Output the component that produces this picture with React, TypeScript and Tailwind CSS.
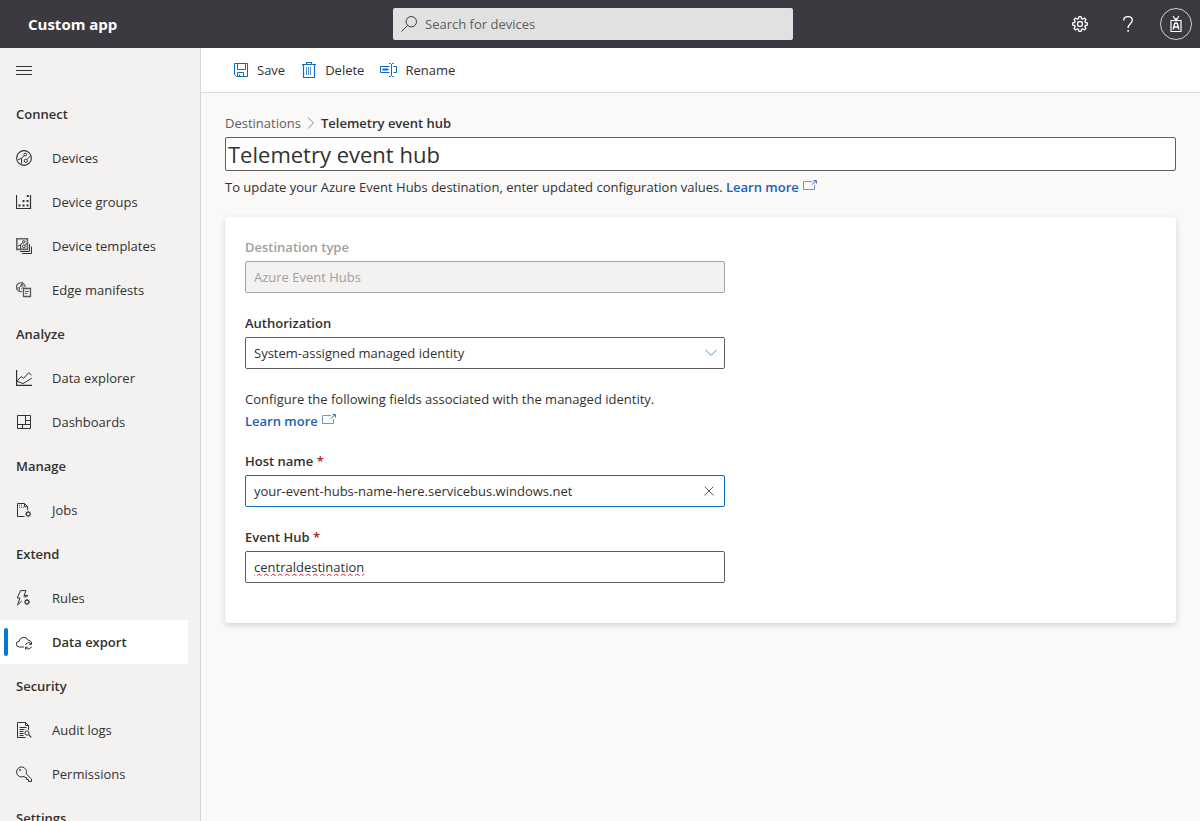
import React, { useState } from "react";

type IconProps = { children: React.ReactNode; className?: string; size?: number; box?: string };

function Icon({ children, className = "", size = 16, box = "0 0 16 16" }: IconProps) {
  return (
    <svg
      className={`shrink-0 ${className}`}
      width={size}
      height={size}
      viewBox={box}
      fill="none"
      stroke="currentColor"
      strokeWidth="1"
      aria-hidden="true"
    >
      {children}
    </svg>
  );
}

const MenuIcon = () => (
  <Icon>
    <path d="M0 4.5h16M0 8.5h16M0 12.5h16" />
  </Icon>
);

const DevicesIcon = () => (
  <Icon>
    <circle cx="8" cy="8" r="7.4" strokeWidth="1.1" />
    <circle cx="9.3" cy="4.6" r="1.4" />
    <circle cx="9.8" cy="10.8" r="1.6" />
    <path d="M8.3 5.600L5.600 8.200v5.600M2 9.800l3.600-1.600M11 9.500l3.200-3.400" />
  </Icon>
);

const GroupsIcon = () => (
  <Icon>
    <path d="M.5 1v13.500h14V1" strokeWidth="1.200" />
    <path
      d="M2.500 10.500h2v2h-2zM6.500 10.500h2v2h-2zM10.500 10.500h2v2h-2zM6.500 6h2v2h-2zM10.500 6h2v2h-2zM10.800 1h2v2h-2z"
      fill="currentColor"
      stroke="none"
    />
  </Icon>
);

const TemplatesIcon = () => (
  <Icon>
    <path d="M.8.8h10.600v10.600H.8z" strokeWidth="1.600" opacity=".75" />
    <circle cx="7.800" cy="3.800" r="1.200" />
    <circle cx="7.800" cy="8.400" r="1.400" />
    <path d="M6.800 4.800L4.600 6.600v4.200M2 8.200l2.600-1.600M8.800 7.400l2.200-2" />
    <path d="M13.500 6v7.500H4M15.500 8.500v7H6" />
  </Icon>
);

const ManifestIcon = () => (
  <Icon>
    <path d="M6.200 9.300A4.400 4.400 0 1 1 9.200 5.200" strokeWidth="1.200" opacity=".8" />
    <circle cx="5.800" cy="3.200" r="1" />
    <path d="M5 4L3.400 5.600v3M1 6.200l2.400-.6M5.400 7l2.400-2.200" opacity=".8" />
    <path d="M7.500 6.500h7v8h-7z" strokeWidth="1.300" fill="#f3f2f1" opacity=".8" />
    <path d="M9 9.500h4M9 11.500h2.500" strokeWidth=".8" />
  </Icon>
);

const ExplorerIcon = () => (
  <Icon>
    <path d="M.6 0v15.400H16" strokeWidth="1.200" />
    <path d="M1 11l4.200-4.400 2.400 1.800 5.200-5.800L15.600 5.400M1 11.200l6 2.400 8.800-5.400" />
  </Icon>
);

const DashboardIcon = () => (
  <Icon>
    <path d="M1.500 1.500h13v13h-13z" />
    <path d="M1.500 10.500h13M9.500 1.500v9M9.500 6.500h5M6.500 10.500v4" />
  </Icon>
);

const MiniGear = ({ x, y }: { x: number; y: number }) => (
  <g transform={`translate(${x} ${y})`}>
    <circle r="1.900" strokeWidth="1.100" />
    <path d="M0-3.100v1M0 2.100v1M-3.100 0h1M2.100 0h1M-2.200-2.200l.7.7M1.500 1.500l.7.7M-2.200 2.200l.7-.7M1.500-1.500l.7-.7" />
  </g>
);

const JobsIcon = () => (
  <Icon>
    <path d="M8.500 14.500h-7V1.500h7l3.200 3.200V8M8.500 1.500v3.200h3.200" />
    <path d="M3 3.200h1M5 3.200h1M3 5.200h1M5 5.200h1M7 5.200h1" strokeWidth=".9" />
    <MiniGear x={12.2} y={12} />
  </Icon>
);

const RulesIcon = () => (
  <Icon>
    <path d="M7.600 6.800H10.500L12 5.400H8L10 .6H4.600L1.200 8H4L1.500 15 5.800 11" />
    <MiniGear x={11} y={12} />
  </Icon>
);

const ExportIcon = () => (
  <Icon>
    <path d="M8 13H3.400A2.900 2.900 0 0 1 3.200 7.200 4.600 4.600 0 0 1 12 6.200 3.200 3.200 0 0 1 15.200 8.400" />
    <path d="M9.600 11a3.100 3.100 0 0 1 5.600-1M15.500 8v2.400h-2.300M15.400 12.600a3.100 3.100 0 0 1-5.400 1.200M9.500 15.400v-2.200h2.300" />
  </Icon>
);

const AuditIcon = () => (
  <Icon>
    <path d="M9.500 15.500h-8V.5h8l3 3V8M9.500.5v3h3" />
    <path d="M3.500 5.500h7M3.500 7.500h5M3.500 9.500h4M3.500 11.500h4M3.500 13.500h4" />
    <circle cx="11" cy="11" r="2.100" />
    <path d="M12.600 12.600l2.800 2.800" strokeWidth="1.200" />
  </Icon>
);

const KeyIcon = () => (
  <Icon>
    <path d="M8.200 10.200A5 5 0 1 1 10.200 7.800L15.500 13v2.500h-3v-2h-2v-2H9z" />
    <circle cx="4" cy="4" r=".9" fill="currentColor" stroke="none" />
  </Icon>
);

const SearchIcon = () => (
  <Icon>
    <circle cx="10.300" cy="5.700" r="5.200" />
    <path d="M6.600 9.400L.4 15.600" />
  </Icon>
);

const GearIcon = () => (
  <Icon>
    <path
      d="M6.900 0.700h2.200l.4 2 1.200.5 1.700-1.200 1.600 1.600-1.200 1.700.5 1.200 2 .4v2.200l-2 .4-.5 1.200 1.200 1.700-1.600 1.600-1.700-1.200-1.200.5-.4 2H6.900l-.4-2-1.200-.5-1.700 1.200L2 12.400l1.200-1.700-.5-1.200-2-.4V6.900l2-.4.5-1.200L2 3.600 3.600 2l1.700 1.200 1.200-.5z"
      strokeWidth="1.300"
      strokeLinejoin="round"
    />
    <circle cx="8" cy="8" r="2.500" strokeWidth="1.300" />
  </Icon>
);

const HelpIcon = () => (
  <Icon>
    <path d="M3.700 4.600C3.700 2 5.400.6 8 .6s4.300 1.400 4.300 3.700c0 3.400-4.200 3.700-4.200 7.700" strokeWidth="1.300" />
    <path d="M8.100 14v1.700" strokeWidth="1.500" />
  </Icon>
);

const BadgeIcon = () => (
  <Icon size={18} box="0 0 18 18">
    <path d="M4 5.500h10v11H4zM6 1l2.600 4M12 1L9.400 5M9 3v3.500" strokeWidth="1.200" />
    <path d="M6.500 14.500v-2l1.300-4.300h2.400l1.300 4.300v2M7 12h4" strokeWidth="1.400" />
  </Icon>
);

const SaveIcon = () => (
  <Icon>
    <path d="M1.500 1.500h13v13h-11l-2-2zM4.500 1.500v6h8v-6M4.500 14.500v-4h6v4M6.500 12.500v2" />
  </Icon>
);

const TrashIcon = () => (
  <Icon>
    <path d="M1 2.500h14M5.500 2.500v-2h5v2M2.500 2.500v13h11v-13" strokeWidth="1.200" />
    <path d="M5.500 5v8M7.500 5v8M9.500 5v8" opacity=".75" />
  </Icon>
);

const RenameIcon = () => (
  <svg className="shrink-0" width="17" height="16" viewBox="0 0 17 16" fill="none" stroke="currentColor" aria-hidden="true">
    <path d="M9.500 4.500h-9v6h9M13.500 4.500h3v6h-3M11.500 2.500v11M9 1.500h1.500l1 1 1-1H14M9 14.500h1.500l1-1 1 1H14" />
    <path d="M2.500 7.500h6" strokeWidth="2" />
  </svg>
);

const ExternalIcon = () => (
  <svg
    className="ml-1 inline-block align-baseline"
    width="14"
    height="12"
    viewBox="0 0 14 12"
    fill="none"
    stroke="#7b8fd0"
    aria-hidden="true"
  >
    <path d="M9 1.500H.5v8h11V5" />
    <path d="M9 4.600L12.800.8M10.500.6h2.900v2.900" stroke="#2f62b5" />
  </svg>
);

type NavEntry = { label: string; icon?: () => React.JSX.Element };

const navigation: NavEntry[] = [
  { label: "Connect" },
  { label: "Devices", icon: DevicesIcon },
  { label: "Device groups", icon: GroupsIcon },
  { label: "Device templates", icon: TemplatesIcon },
  { label: "Edge manifests", icon: ManifestIcon },
  { label: "Analyze" },
  { label: "Data explorer", icon: ExplorerIcon },
  { label: "Dashboards", icon: DashboardIcon },
  { label: "Manage" },
  { label: "Jobs", icon: JobsIcon },
  { label: "Extend" },
  { label: "Rules", icon: RulesIcon },
  { label: "Data export", icon: ExportIcon },
  { label: "Security" },
  { label: "Audit logs", icon: AuditIcon },
  { label: "Permissions", icon: KeyIcon },
  { label: "Settings" },
];

function Header() {
  return (
    <header className="grid h-12 shrink-0 grid-cols-[1fr_minmax(0,400px)_1fr] items-center bg-[#3b3a40] text-white">
      <div className="pl-7 text-[15px] font-bold">Custom app</div>
      <label className="-ml-[7px] flex h-8 w-full items-center gap-2 rounded-xs bg-[#e1e1e1] px-2 text-[#3b3a40]">
        <SearchIcon />
        <input
          type="search"
          aria-label="Search for devices"
          placeholder="Search for devices"
          className="min-w-0 flex-1 bg-transparent outline-none placeholder:text-[#605e5c]"
        />
      </label>
      <div className="flex items-center justify-end gap-4 pr-2">
        <button type="button" aria-label="Settings" className="flex size-8 items-center justify-center">
          <GearIcon />
        </button>
        <button type="button" aria-label="Help" className="flex size-8 items-center justify-center">
          <HelpIcon />
        </button>
        <button
          type="button"
          aria-label="Account"
          className="flex size-8 items-center justify-center rounded-full border border-[#d0d0d0]"
        >
          <BadgeIcon />
        </button>
      </div>
    </header>
  );
}

function Sidebar() {
  return (
    <nav className="w-[201px] shrink-0 overflow-y-auto border-r border-[#d8d6d4] bg-[#f3f2f1] pr-3 [scrollbar-width:none]">
      <button type="button" aria-label="Toggle navigation" className="flex h-11 items-center px-4">
        <MenuIcon />
      </button>
      {navigation.map(({ label, icon: Glyph }) => {
        if (!Glyph) {
          return (
            <h2 key={label} className="flex h-11 items-center px-4 font-semibold">
              {label}
            </h2>
          );
        }
        const current = label === "Data export";
        return (
          <a
            key={label}
            href="#"
            aria-current={current ? "page" : undefined}
            className={`relative flex h-11 items-center gap-5 px-4 ${current ? "bg-white font-semibold" : ""}`}
          >
            {current && <span className="absolute inset-y-2 left-1 w-1 rounded-sm bg-[#0078d4]" />}
            <Glyph />
            {label}
          </a>
        );
      })}
    </nav>
  );
}

function Command({ label, children }: { label: string; children: React.ReactNode }) {
  return (
    <button type="button" className="flex items-center gap-2">
      <span className="flex text-[#0f6cbd]">{children}</span>
      {label}
    </button>
  );
}

function LearnMore() {
  return (
    <a href="#" className="font-semibold text-[#1b62b5]">
      Learn more
      <ExternalIcon />
    </a>
  );
}

const fieldClass = "block h-8 w-full rounded-xs border px-2 outline-none";

function DestinationForm() {
  const [host, setHost] = useState("your-event-hubs-name-here.servicebus.windows.net");
  return (
    <form className="mt-5 rounded bg-white px-5 pt-5 pb-10 shadow-[0_2px_6px_rgba(0,0,0,0.16)]">
      <div className="max-w-[480px]">
        <label htmlFor="type" className="mb-1 block font-semibold text-[#a19f9d]">
          Destination type
        </label>
        <input
          id="type"
          disabled
          defaultValue="Azure Event Hubs"
          className={`${fieldClass} border-[#a8a6a4] bg-[#f3f2f1] text-[#a19f9d]`}
        />
        <label htmlFor="authorization" className="mt-5 mb-1 block font-semibold">
          Authorization
        </label>
        <div className="relative">
          <select id="authorization" className={`${fieldClass} appearance-none border-[#605e5c] bg-white`}>
            <option>System-assigned managed identity</option>
          </select>
          <svg
            className="pointer-events-none absolute top-3 right-2"
            width="12"
            height="8"
            viewBox="0 0 12 8"
            fill="none"
            stroke="#5b8fc4"
            aria-hidden="true"
          >
            <path d="M.4.8L6 6.400 11.600.8" />
          </svg>
        </div>
        <p className="my-[19px] leading-[22px]">
          Configure the following fields associated with the managed identity.
          <br />
          <LearnMore />
        </p>
        <label htmlFor="host" className="mb-1 block font-semibold">
          Host name <span className="text-[#a4262c]">*</span>
        </label>
        <div className="relative">
          <input
            id="host"
            required
            value={host}
            onChange={(event) => setHost(event.target.value)}
            className={`${fieldClass} border-[#0f6cbd] pr-8`}
          />
          <button
            type="button"
            aria-label="Clear host name"
            onClick={() => setHost("")}
            className="absolute inset-y-0 right-0 flex w-8 items-center justify-center text-[#605e5c]"
          >
            <Icon size={10} box="0 0 10 10">
              <path d="M.5.5l9 9M9.500.5l-9 9" />
            </Icon>
          </button>
        </div>
        <label htmlFor="hub" className="mt-5 mb-1 block font-semibold">
          Event Hub <span className="text-[#a4262c]">*</span>
        </label>
        <input
          id="hub"
          required
          defaultValue="centraldestination"
          className={`${fieldClass} border-[#605e5c] leading-[30px] underline decoration-[#e81123] decoration-wavy decoration-1 underline-offset-1 [text-decoration-skip-ink:none]`}
        />
      </div>
    </form>
  );
}

export default function App() {
  return (
    <div className="flex h-screen flex-col bg-[#faf9f8] font-['Open_Sans','Noto_Sans',sans-serif] text-[13px] leading-5 text-[#323130]">
      <Header />
      <div className="flex min-h-0 flex-1">
        <Sidebar />
        <div className="flex min-w-0 flex-1 flex-col">
          <div className="flex h-[45px] shrink-0 items-center gap-4 border-b border-[#dddbd9] bg-white px-8">
            <Command label="Save">
              <SaveIcon />
            </Command>
            <Command label="Delete">
              <TrashIcon />
            </Command>
            <Command label="Rename">
              <RenameIcon />
            </Command>
          </div>
          <main className="min-h-0 flex-1 overflow-y-auto px-6 py-5">
            <nav aria-label="Breadcrumb" className="flex items-center gap-1.5">
              <a href="#" className="text-[#605e5c]">
                Destinations
              </a>
              <svg width="8" height="12" viewBox="0 0 8 12" fill="none" stroke="#8a8886" aria-hidden="true">
                <path d="M1 .5L6.500 6 1 11.500" />
              </svg>
              <span className="font-semibold">Telemetry event hub</span>
            </nav>
            <input
              aria-label="Destination name"
              defaultValue="Telemetry event hub"
              className="mt-1 block h-[34px] w-full rounded-xs border border-[#605e5c] bg-white px-0.5 text-[22px] outline-none"
            />
            <p className="mt-1.5">
              To update your Azure Event Hubs destination, enter updated configuration values. <LearnMore />
            </p>
            <DestinationForm />
          </main>
        </div>
      </div>
    </div>
  );
}
